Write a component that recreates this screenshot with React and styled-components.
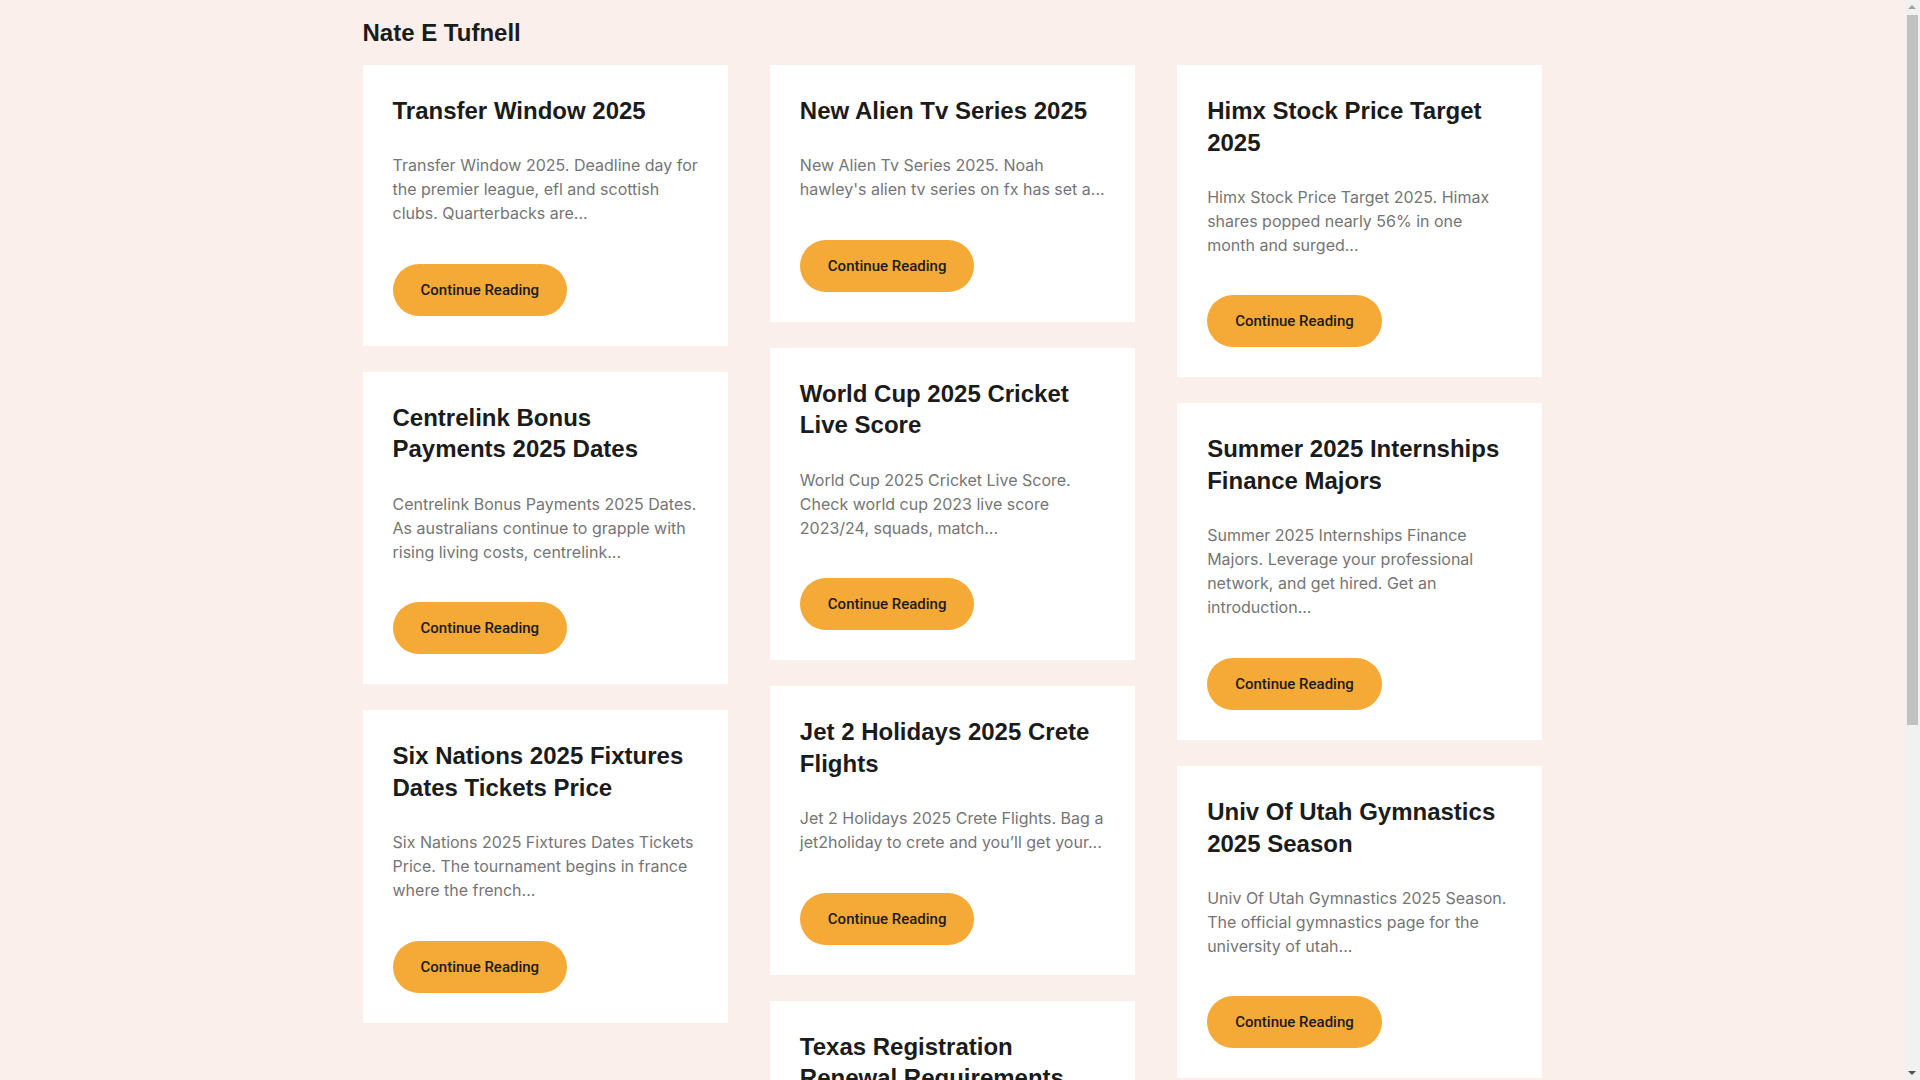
import React from "react";
import styled, { createGlobalStyle } from "styled-components";

const GlobalStyle = createGlobalStyle`
  html, body {
    margin: 0;
    padding: 0;
    background: #faefea;
  }
  body {
    padding-right: 15px;
    font-family: "Inter", "Liberation Sans", Arial, sans-serif;
    color: #1b1b1b;
  }
  * { box-sizing: border-box; }
`;

const Page = styled.div`
  width: 1180px;
  margin: 0 auto;
  padding-bottom: 200px;
`;

const Header = styled.header`
  padding: 18px 0 18px;
`;

const SiteTitle = styled.h1`
  margin: 0;
  font-family: "Liberation Sans", Arial, sans-serif;
  font-weight: 700;
  font-size: 24px;
  line-height: 29px;
  color: #1b1b1b;
`;

const Grid = styled.main`
  display: flex;
  gap: 42px;
  align-items: flex-start;
`;

const Column = styled.div`
  flex: 1 1 0;
  min-width: 0;
  display: flex;
  flex-direction: column;
  gap: 26px;
`;

const Card = styled.article`
  background: #ffffff;
  padding: 30px;
`;

const CardTitle = styled.h2`
  margin: 0 0 26.8px;
  font-family: "Liberation Sans", Arial, sans-serif;
  font-weight: 700;
  font-size: 24px;
  line-height: 31.6px;
  color: #1b1b1b;
`;

const Excerpt = styled.p`
  margin: 0 -2px 38.5px 0;
  font-family: "Inter", sans-serif;
  font-size: 16px;
  line-height: 24px;
  color: #757575;
`;

const ReadButton = styled.a`
  display: inline-block;
  height: 52px;
  padding: 0 28px;
  border-radius: 26px;
  background: #f5a936;
  font-family: "Roboto", "Inter", sans-serif;
  font-weight: 500;
  font-size: 15px;
  line-height: 52px;
  color: #1b1b1b;
  text-decoration: none;
  cursor: pointer;
`;

const Footer = styled.footer`
  padding-top: 60px;
  font-family: "Inter", sans-serif;
  font-size: 14px;
  color: #757575;
`;

/* fake browser scrollbar that overlays the right edge, as in the reference */
const ScrollTrack = styled.div`
  position: fixed;
  top: 0;
  right: 0;
  width: 15px;
  height: 100vh;
  background: #f1f1f1;
  z-index: 10;
`;

const ScrollThumb = styled.div`
  position: absolute;
  left: 2px;
  right: 2px;
  top: 15px;
  height: 710px;
  background: #c1c1c1;
`;

const Arrow = styled.div`
  position: absolute;
  left: 3px;
  width: 0;
  height: 0;
  border-left: 4.5px solid transparent;
  border-right: 4.5px solid transparent;
  ${(p) =>
    p.$down
      ? `bottom: 5px; border-top: 4px solid #505050;`
      : `top: 5px; border-bottom: 4px solid #a3a3a3;`}
`;

const columns = [
  [
    {
      title: "Transfer Window 2025",
      text: "Transfer Window 2025. Deadline day for the premier league, efl and scottish clubs. Quarterbacks are...",
    },
    {
      title: "Centrelink Bonus Payments 2025 Dates",
      text: "Centrelink Bonus Payments 2025 Dates. As australians continue to grapple with rising living costs, centrelink...",
    },
    {
      title: "Six Nations 2025 Fixtures Dates Tickets Price",
      text: "Six Nations 2025 Fixtures Dates Tickets Price. The tournament begins in france where the french...",
    },
  ],
  [
    {
      title: "New Alien Tv Series 2025",
      text: "New Alien Tv Series 2025. Noah hawley's alien tv series on fx has set a...",
    },
    {
      title: "World Cup 2025 Cricket Live Score",
      text: "World Cup 2025 Cricket Live Score. Check world cup 2023 live score 2023/24, squads, match...",
    },
    {
      title: "Jet 2 Holidays 2025 Crete Flights",
      text: "Jet 2 Holidays 2025 Crete Flights. Bag a jet2holiday to crete and you\u2019ll get your...",
    },
    {
      title: "Texas Registration Renewal Requirements 2025",
      text: "Texas Registration Renewal Requirements 2025. Vehicle owners can renew online, by mail or in...",
    },
  ],
  [
    {
      title: "Himx Stock Price Target 2025",
      text: "Himx Stock Price Target 2025. Himax shares popped nearly 56% in one month and surged...",
    },
    {
      title: "Summer 2025 Internships Finance Majors",
      text: "Summer 2025 Internships Finance Majors. Leverage your professional network, and get hired. Get an introduction...",
    },
    {
      title: "Univ Of Utah Gymnastics 2025 Season",
      text: "Univ Of Utah Gymnastics 2025 Season. The official gymnastics page for the university of utah...",
    },
    {
      title: "Best Electric Cars 2025 Uk",
      text: "Best Electric Cars 2025 Uk. The latest electric models offer longer range and faster...",
    },
  ],
];

export default function App() {
  return (
    <>
      <GlobalStyle />
      <Page>
        <Header>
          <SiteTitle>Nate E Tufnell</SiteTitle>
        </Header>
        <Grid>
          {columns.map((col, ci) => (
            <Column key={ci}>
              {col.map((post) => (
                <Card key={post.title}>
                  <CardTitle>{post.title}</CardTitle>
                  <Excerpt>{post.text}</Excerpt>
                  <ReadButton href="#">Continue Reading</ReadButton>
                </Card>
              ))}
            </Column>
          ))}
        </Grid>
        <Footer>© 2025 Nate E Tufnell</Footer>
      </Page>
      <ScrollTrack aria-hidden="true">
        <Arrow />
        <ScrollThumb />
        <Arrow $down />
      </ScrollTrack>
    </>
  );
}
